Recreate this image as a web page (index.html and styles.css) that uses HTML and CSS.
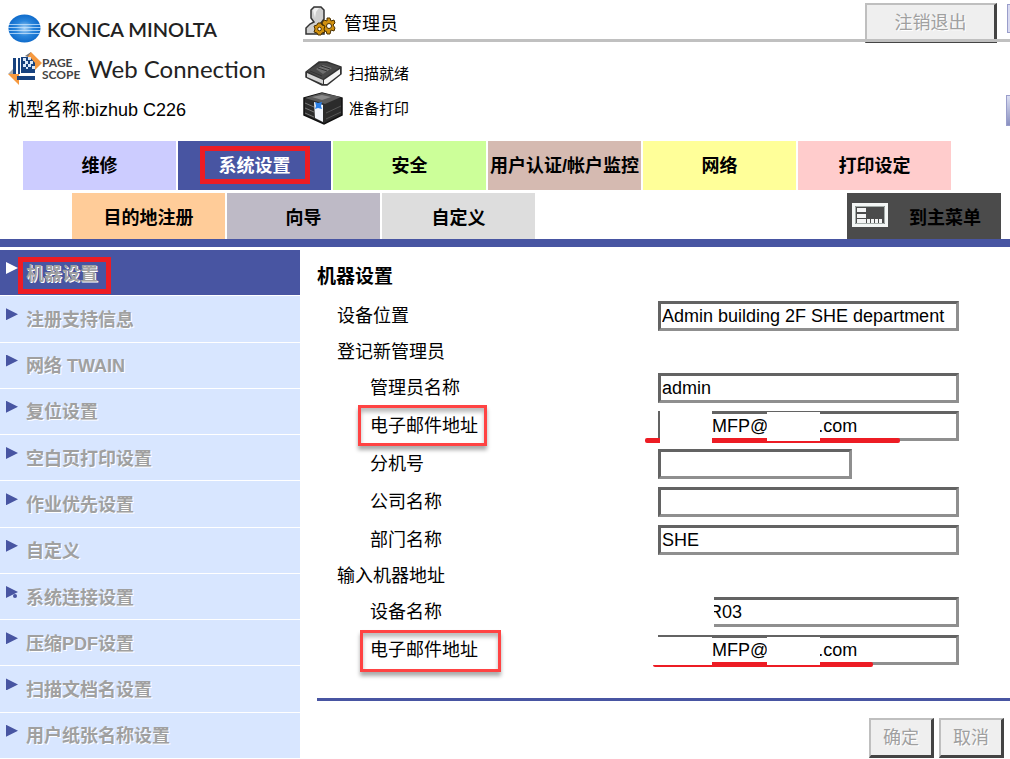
FILE: index.html
```html
<!DOCTYPE html>
<html lang="zh-CN">
<head>
<meta charset="utf-8">
<title>PageScope Web Connection</title>
<link rel="stylesheet" href="styles.css">
</head>
<body>
<header class="header">
  <div class="brand">
    <div class="brand-row">
      <svg class="globe" viewBox="0 0 33 29" aria-hidden="true">
        <defs><radialGradient id="globe" cx="50%" cy="50%" r="55%"><stop offset="0" stop-color="#a9d2f5"/><stop offset=".5" stop-color="#2a86dc"/><stop offset="1" stop-color="#0a66c8"/></radialGradient></defs>
        <ellipse cx="16.500" cy="14.500" rx="16" ry="14" fill="url(#globe)"/>
        <path d="M1 10.500h31M0 13.500h33M0 16.500h33M1 19.500h31" stroke="#c5e2fb" stroke-width=".8"/>
      </svg>
      <span class="maker">KONICA MINOLTA</span>
    </div>
    <div class="brand-row product-row">
      <svg class="scope" viewBox="0 0 34 33" aria-hidden="true">
        <path d="M17 4l6-4v6z" fill="#777"/><path d="M23 0l11 11-9 9V9h-8z" fill="#f6993f"/>
        <path d="M0 22l6-6v6z" fill="#aaa"/><path d="M0 22h11v11z" fill="#f6993f"/>
        <path d="M13 5h9l5 6v10H13z" fill="#17427f"/>
        <path d="M5 6h3v16H5zM10 6h2v16h-2zM9 24h18v4H9z" fill="#17427f"/>
        <path d="M15 6h3v3h-3zM20 5h3v3h-3zM17 9h3v3h-3zM22 9h3v3h-3zM15 12h3v3h-3zM20 12h3v3h-3zM24 14h3v3h-3zM18 15h2v2h-2z" fill="#dbe8f7"/>
      </svg>
      <span class="scope-name">PAGE<br>SCOPE</span>
      <span class="product">Web Connection</span>
    </div>
    <p class="model">机型名称:bizhub C226</p>
  </div>
  <div class="status">
    <div class="user-row">
      <svg class="user-icon" viewBox="0 0 31 30" aria-hidden="true">
        <path d="M6 4l3-3h7l3 3v9l-3 4 3 3v8H1v-6l4-4 4-2-3-4z" fill="#cfcfcf" stroke="#333" stroke-width="1.500"/>
        <path d="M8 4l2-2h4l-3 4-1 6z" fill="#f2f2f2"/>
        <g fill="#d0900f" stroke="#4a3000"><path d="M22 12h3l1 3 3-1 1 3-2 2 2 3-1 3-3-1-1 4h-3l-1-3-3 1-1-3 2-3-2-3 2-3 3 1z"/><path d="M13 17h3l1 2 3 1-1 3 1 3-3 1-1 2h-3l-1-2-3-1 1-3-1-3 3-1z"/></g>
        <circle cx="24" cy="20" r="2.500" fill="#fff" stroke="#4a3000"/><circle cx="14.500" cy="23" r="1.800" fill="#fff" stroke="#4a3000"/>
      </svg>
      <span class="user-name">管理员</span>
      <button class="btn logout" type="button" disabled>注销退出</button>
      <button class="edge-btn" type="button" aria-label="帮助"></button>
    </div>
    <div class="device-row">
      <svg class="device-icon" viewBox="0 0 40 27" aria-hidden="true">
        <path d="M3 12L16 2h8l14 5v7L24 25h-5L3 17z" fill="#333" stroke="#333" stroke-width="1.500"/>
        <path d="M4 13l16 7v4L4 17z" fill="#d5d5d5"/><path d="M21 20L37 9v5L24 24h-3z" fill="#f6f6f6"/>
        <path d="M4 11L17 3h7l13 4-17 12z" fill="#484848"/>
        <path d="M13 9l7-4 9 3-9 6z" fill="#6f6f6f"/><path d="M15 8l9 3M18 6l9 3M7 11l12 5" stroke="#333"/>
      </svg>
      <span>扫描就绪</span>
    </div>
    <div class="device-row">
      <svg class="device-icon printer" viewBox="0 0 40 33" aria-hidden="true">
        <path d="M1 6l18-5 20 5v17L21 32 1 23z" fill="#2b2b2b" stroke="#111" stroke-width="1.500"/>
        <path d="M2 6l17-5 19 4-16 7z" fill="#5a5a5a"/><path d="M9 5l10-2 9 2-9 3z" fill="#8a8a8a"/>
        <path d="M2 11l9 4M2 16l9 4M2 21l9 4" stroke="#777"/>
        <path d="M23 21l15-7M23 27l15-7" stroke="#555"/>
        <path d="M11 10l9 3v17l-8-4z" fill="#f3f6fb"/>
        <path d="M12 10l3 1 4-1-1 4 1 3-4-1-3 1 1-3z" fill="#2a80e8"/>
      </svg>
      <span>准备打印</span>
      <button class="edge-btn edge-low" type="button" aria-label="刷新"></button>
    </div>
  </div>
</header>

<nav class="tabs">
  <div class="tab-row">
    <a class="tab lilac" href="#">维修</a>
    <a class="tab active" href="#"><span class="mark">系统设置</span></a>
    <a class="tab green" href="#">安全</a>
    <a class="tab brown" href="#">用户认证/帐户监控</a>
    <a class="tab yellow" href="#">网络</a>
    <a class="tab pink" href="#">打印设定</a>
  </div>
  <div class="tab-row second">
    <a class="tab orange" href="#">目的地注册</a>
    <a class="tab mauve" href="#">向导</a>
    <a class="tab gray" href="#">自定义</a>
    <a class="tab main-menu" href="#">
      <svg class="menu-icon" viewBox="0 0 36 24" aria-hidden="true"><path d="M1.500 1.500h33v21h-33z" fill="#4b4b4b" stroke="#f4f6f5" stroke-width="3"/><path d="M3.500 3.500h29v17h-29z" fill="none" stroke="#a5adaa"/><path d="M5 5h9v4H5zM5 11h9v4H5zM5 16h9v4H5zM15 16h3v4h-3zM19 16h3v4h-3zM23 16h3v4h-3zM27 16h3v4h-3z" fill="#f4f4f4"/></svg>
      <span>到主菜单</span>
    </a>
  </div>
</nav>

<div class="body">
  <nav class="side">
    <a class="side-item current" href="#"><span class="side-mark">机器设置</span></a>
    <a class="side-item" href="#">注册支持信息</a>
    <a class="side-item" href="#">网络 TWAIN</a>
    <a class="side-item" href="#">复位设置</a>
    <a class="side-item" href="#">空白页打印设置</a>
    <a class="side-item" href="#">作业优先设置</a>
    <a class="side-item" href="#">自定义</a>
    <a class="side-item dotted" href="#">系统连接设置</a>
    <a class="side-item" href="#">压缩PDF设置</a>
    <a class="side-item" href="#">扫描文档名设置</a>
    <a class="side-item" href="#">用户纸张名称设置</a>
  </nav>
  <main class="content">
    <h1 class="title">机器设置</h1>
    <form class="form">
      <div class="field"><label for="place">设备位置</label><input id="place" type="text" value="Admin building 2F SHE department"></div>
      <h2 class="group-title">登记新管理员</h2>
      <div class="group">
        <div class="field"><label for="name">管理员名称</label><input id="name" type="text" value="admin"></div>
        <div class="field">
          <label for="mail"><span class="ring">电子邮件地址</span></label>
          <div class="control"><input id="mail" class="masked" type="text" value="MFP@          .com"><i class="line line-a"></i><i class="cover cover-a"></i><i class="cover cover-b"></i></div>
        </div>
        <div class="field"><label for="ext">分机号</label><input id="ext" class="short" type="text"></div>
        <div class="field"><label for="company">公司名称</label><input id="company" type="text"></div>
        <div class="field"><label for="dept">部门名称</label><input id="dept" type="text" value="SHE"></div>
      </div>
      <h2 class="group-title">输入机器地址</h2>
      <div class="group">
        <div class="field">
          <label for="device">设备名称</label>
          <div class="control"><input id="device" class="masked clipped" type="text" value="R03"><i class="cover cover-c"></i></div>
        </div>
        <div class="field">
          <label for="device-mail"><span class="ring ring-wide">电子邮件地址</span></label>
          <div class="control"><input id="device-mail" class="masked" type="text" value="MFP@          .com"><i class="line line-b"></i><i class="cover cover-d"></i><i class="cover cover-e"></i></div>
        </div>
      </div>
      <div class="actions">
        <button class="btn" type="submit" disabled>确定</button>
        <button class="btn" type="button" disabled>取消</button>
      </div>
    </form>
  </main>
</div>
</body>
</html>
```
FILE: styles.css
```css
* { box-sizing: border-box; }

body {
  margin: 0;
  min-height: 100vh;
  display: flex;
  flex-direction: column;
  overflow-x: hidden;
  background: #fff;
  color: #000;
  font: 18px/24px "Liberation Sans", "Noto Sans CJK SC", sans-serif;
}

a { color: inherit; text-decoration: none; }
svg { display: block; flex: none; }

/* Header */
.header { display: flex; height: 141px; }
.brand { flex: none; width: 303px; padding: 14px 0 0 8px; }
.brand-row { display: flex; align-items: center; height: 29px; }
.globe { width: 33px; height: 29px; }
.maker { margin-left: 6px; font: 600 20px/28px Lato, sans-serif; color: #222; white-space: nowrap; }
.product-row { height: 33px; margin-top: 9px; }
.scope { width: 34px; height: 33px; }
.scope-name { width: 46px; font: bold 12px/12px Lato, sans-serif; color: #444; }
.product { font: 24px/32px Lato, sans-serif; color: #222; white-space: nowrap; }
.model { margin: 13px 0 0; }

.status { flex: 1; min-width: 0; }
.user-row {
  position: relative;
  display: flex;
  align-items: center;
  height: 42px;
  padding: 3px 0 0 2px;
}
.user-row::after {
  content: "";
  position: absolute;
  inset: auto 0 0 0;
  height: 3px;
  background: #c0c0c0;
}
.user-icon { width: 31px; height: 30px; margin-bottom: 4px; }
.user-name { margin-left: 8px; padding-top: 3px; }
.logout { align-self: flex-start; width: 132px; margin-left: auto; }
.edge-btn {
  align-self: flex-start;
  flex: none;
  width: 3px;
  height: 29px;
  margin: 1px 0 0 10px;
  padding: 0;
  border: solid #9a9ecb;
  border-width: 1px 0 1px 1px;
  background: #d9daf0;
}
.edge-low { width: 4px; height: 31px; margin: 4px 0 0 auto; background: linear-gradient(#dcdff2, #8990c0); }
.device-row { display: flex; align-items: center; height: 35px; font-size: 15px; }
.user-row + .device-row { margin-top: 14px; }
.device-icon { width: 40px; height: 27px; margin-right: 6px; }
.printer { height: 33px; }

/* Tabs */
.tabs { border-bottom: 8px solid #4855a2; }
.tab-row { display: flex; gap: 2px; height: 49px; padding-left: 23px; }
.second { height: 46px; margin-top: 3px; padding: 0 9px 0 72px; }
.second .tab { padding-top: 3px; }
.tab {
  display: flex;
  align-items: center;
  justify-content: center;
  flex: 0 1 153px;
  font-weight: bold;
  white-space: nowrap;
}
.lilac { background: #ccf; }
.active { background: #4855a2; color: #fff; }
.green { background: #cf9; }
.brown { background: #d5bab1; }
.yellow { background: #ff9; }
.pink { background: #fcc; }
.orange { background: #fc9; }
.mauve { background: #bebac6; }
.gray { background: #ddd; }
.main-menu { flex-basis: 154px; margin-left: auto; justify-content: space-between; padding: 0 20px 0 5px; background: #4b4b4b; }
.menu-icon { width: 36px; height: 24px; margin-bottom: 6px; }
.mark, .side-mark, .ring { position: relative; }
.mark::after, .side-mark::after {
  content: "";
  position: absolute;
  inset: -8px -19px -6px;
  border: 5px solid #ed1c24;
}

/* Side menu */
.body { display: flex; flex: 1; padding-top: 3px; }
.side { display: grid; grid-auto-rows: 1fr; gap: 1px; flex: none; width: 300px; padding-bottom: 1px; }
.side-item {
  position: relative;
  display: flex;
  align-items: center;
  padding: 2px 0 0 26px;
  background: #d8e6ff;
  color: #a0a0a0;
  font-weight: bold;
  text-shadow: 1px 1px #fff;
}
.side-item::before {
  content: "";
  position: absolute;
  left: 6px;
  top: 12px;
  width: 12px;
  height: 12px;
  background: #4855a2;
  clip-path: polygon(0 0, 100% 50%, 0 100%);
}
.dotted::after {
  content: "";
  position: absolute;
  left: 13px;
  top: 20px;
  width: 4px;
  height: 4px;
  border-radius: 50%;
  background: #4855a2;
}
.current { background: #4855a2; }
.current::before { background: #fff; }
.side-mark::after { inset: -5px -13px -8px -8px; }

/* Form */
.content { flex: 1; min-width: 0; padding-left: 17px; }
.title { margin: 0; padding: 15px 0 12px; font-size: 19px; line-height: 24px; }
.form { display: flex; flex-direction: column; gap: 6px; }
.group { display: flex; flex-direction: column; gap: 8px; }
.group-title { margin: 0; padding-left: 20px; font-size: 18px; font-weight: normal; line-height: 30px; }
.field { display: grid; grid-template-columns: 341px minmax(0, 301px); height: 30px; line-height: 30px; }
.field label { padding-left: 20px; }
.group .field label { padding-left: 53px; }
.control { position: relative; }
input {
  width: 100%;
  height: 30px;
  padding: 0 1px;
  border: 3px solid;
  border-color: #636363 #8f8f8f #8f8f8f #636363;
  border-radius: 0;
  background: #fff;
  color: #000;
  font: inherit;
}
.short { width: 194px; }
.masked { padding-left: 51px; }
.clipped { padding-left: 48px; }

.ring::after {
  content: "";
  position: absolute;
  inset: -11px -9px -10px -12px;
  border: 3px solid #ff4343;
  box-shadow: 0 4px 4px #0005, inset 0 4px 4px #0004;
}
.ring-wide::after { inset: -10px -23px -12px -10px; }

/* Red strokes and white patches lying over the fields */
.line, .cover { position: absolute; display: block; }
.line { height: 5px; border-radius: 2px; background: #ed1c24; }
.line-a { left: -13px; top: 27px; width: 255px; }
.line-b { left: -5px; top: 27px; width: 220px; }
.cover { background: #fff; }
.cover-a { left: 2px; top: 0; width: 52px; height: 33px; }
.cover-b { left: 109px; top: 1px; width: 53px; height: 29px; }
.cover-c { left: -3px; top: 0; width: 59px; height: 30px; }
.cover-d { left: -5px; top: 2px; width: 59px; height: 28px; }
.cover-e { left: 109px; top: 2px; width: 53px; height: 28px; }

/* Buttons */
.btn {
  height: 40px;
  padding: 0;
  border: solid;
  border-width: 2px 3px 3px 2px;
  border-color: #bfbfbf #444 #444 #bfbfbf;
  border-radius: 0;
  background: #efefef;
  color: #a0a0a0;
  font: inherit;
  text-shadow: 1px 1px #fff;
}
.actions {
  display: flex;
  justify-content: flex-end;
  gap: 5px;
  margin-top: 27px;
  padding: 17px 6px 1px 0;
  border-top: 3px solid #4855a2;
}
.actions .btn { width: 65px; }
```
